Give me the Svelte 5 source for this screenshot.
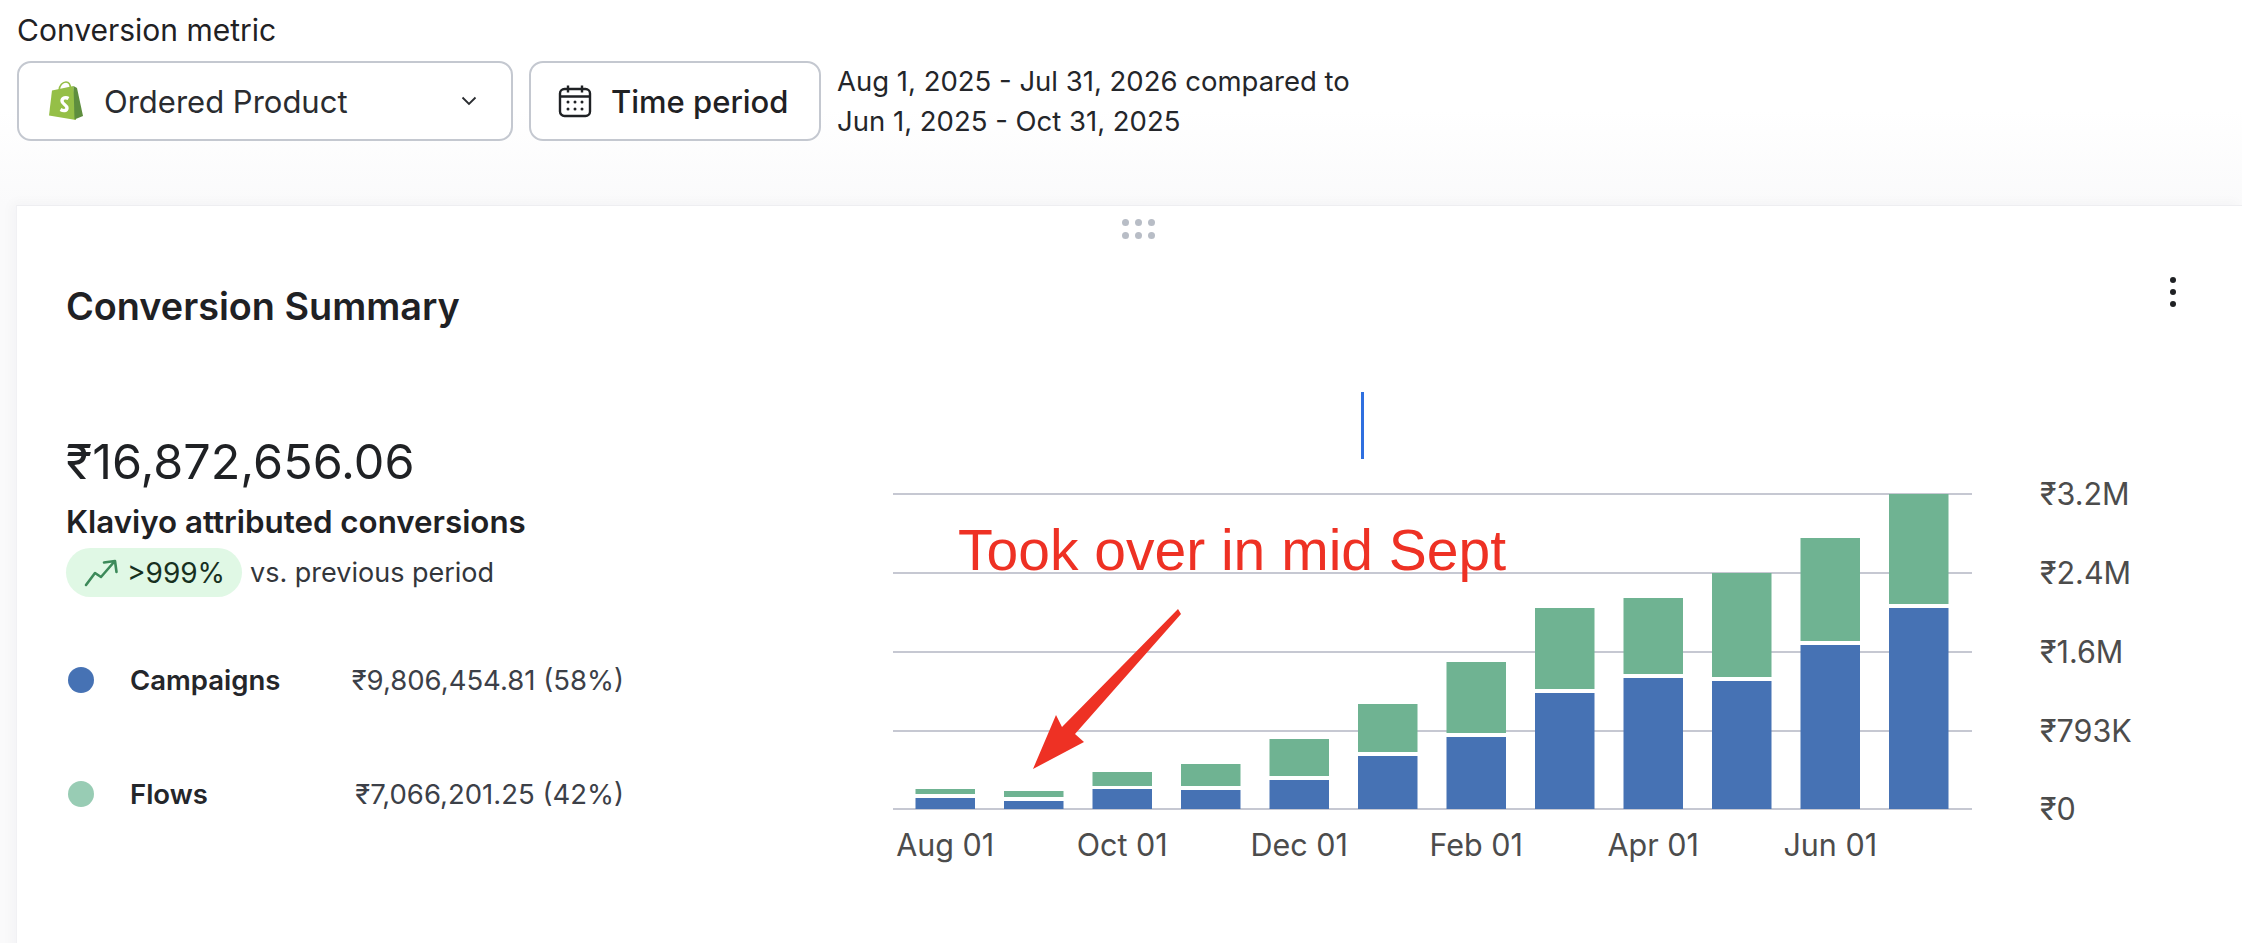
<script lang="ts">
  // y values are page px: the chart svg's viewBox starts at the page y it sits on
  const top = 470;
  const base = 809;
  const grid = [494, 573, 652, 731, 809];
  const ticks = ["₹3.2M", "₹2.4M", "₹1.6M", "₹793K", "₹0"];
  const bars = [
    { green: 789, gap: 794, blue: 798 },
    { green: 791, gap: 797, blue: 801 },
    { green: 772, gap: 786, blue: 789 },
    { green: 764, gap: 786, blue: 790 },
    { green: 739, gap: 776, blue: 780 },
    { green: 704, gap: 752, blue: 756 },
    { green: 662, gap: 733, blue: 737 },
    { green: 608, gap: 689, blue: 693 },
    { green: 598, gap: 674, blue: 678 },
    { green: 573, gap: 677, blue: 681 },
    { green: 538, gap: 641, blue: 645 },
    { green: 494, gap: 604, blue: 608 },
  ];
  const months = ["Aug 01", "Oct 01", "Dec 01", "Feb 01", "Apr 01", "Jun 01"];
  const left = 890;
  const barX = (i: number) => 915.5 - left + i * 88.5;
  const legend = [
    { name: "Campaigns", color: "#4672b4", value: "₹9,806,454.81 (58%)" },
    { name: "Flows", color: "#98ccb4", value: "₹7,066,201.25 (42%)" },
  ];
</script>

<div class="page">
  <div class="controls">
    <div class="label">Conversion metric</div>
    <div class="row">
      <button class="select">
        <svg class="shopify" viewBox="0 0 36 40" width="36" height="40" aria-hidden="true">
          <path d="M4 9.5 25.5 5 28 39 1 34.5Z" fill="#95bf47" />
          <path d="M25.5 5 29 7 35 35 26.5 38.5Z" fill="#5e8e3e" />
          <path d="M11 10C11 4 15 1 18 1c3 0 4.5 3 4.5 7" fill="none" stroke="#95bf47" stroke-width="1.6" />
          <path d="M20.5 17.5c-2.5-1.5-6.5-.8-6.5 2.5 0 3.2 5 3.8 5 7 0 3-3.5 3.2-6.5 1.5" fill="none" stroke="#fff" stroke-width="3.4" />
        </svg>
        <span class="select-text">Ordered Product</span>
        <svg class="chevron" viewBox="0 0 16 10" width="16" height="10" aria-hidden="true">
          <path d="M1.5 1.5 8 8l6.5-6.5" fill="none" stroke="#2a2c30" stroke-width="1.8" />
        </svg>
      </button>
      <button class="period">
        <svg viewBox="0 0 34 34" width="34" height="34" aria-hidden="true">
          <rect x="2" y="5" width="30" height="27" rx="4.5" fill="none" stroke="#1f2124" stroke-width="2.4" />
          <path d="M2 12.5h30M10 1.5v7M24 1.5v7" fill="none" stroke="#1f2124" stroke-width="2.4" />
          <g fill="#1f2124">
            <circle cx="10" cy="18" r="1.5" /><circle cx="17" cy="18" r="1.5" /><circle cx="24" cy="18" r="1.5" />
            <circle cx="10" cy="25" r="1.5" /><circle cx="17" cy="25" r="1.5" /><circle cx="24" cy="25" r="1.5" />
          </g>
        </svg>
        <span>Time period</span>
      </button>
      <div class="range">
        <div>Aug 1, 2025 - Jul 31, 2026 compared to</div>
        <div>Jun 1, 2025 - Oct 31, 2025</div>
      </div>
    </div>
  </div>

  <section class="card">
    <div class="grip" aria-hidden="true">
      {#each Array(6) as _}<i></i>{/each}
    </div>
    <header class="card-head">
      <h2>Conversion Summary</h2>
      <div class="kebab" aria-hidden="true"><i></i><i></i><i></i></div>
    </header>

    <div class="card-body">
      <div class="summary">
        <div class="amount">₹16,872,656.06</div>
        <div class="caption">Klaviyo attributed conversions</div>
        <div class="delta">
          <span class="pill">
            <svg viewBox="0 0 34 28" width="34" height="28" aria-hidden="true">
              <path d="M2 26 11 14l6 4L30 3M20 3.5 31 2l1.5 11" fill="none" stroke="#3d8a5a" stroke-width="2.6" stroke-linejoin="round" stroke-linecap="round" />
            </svg>
            &gt;999%
          </span>
          <span>vs. previous period</span>
        </div>
        <ul class="legend">
          {#each legend as item}
            <li>
              <i style={`background: ${item.color}`}></i>
              <strong>{item.name}</strong>
              <span>{item.value}</span>
            </li>
          {/each}
        </ul>
      </div>

      <div class="chart">
        <div class="marker"></div>
        <svg viewBox={`0 ${top} 1300 410`} width="1300" height="410" role="img" aria-label="Conversions by month">
          {#each grid as y, i}
            <line x1={893 - left} x2={1972 - left} y1={y} y2={y} class="gridline" />
            <text x={2040 - left} y={y + 11} class="tick">{ticks[i]}</text>
          {/each}
          {#each bars as bar, i}
            <rect x={barX(i)} y={bar.green} width="59.5" height={bar.gap - bar.green} fill="#6fb392" />
            <rect x={barX(i)} y={bar.blue} width="59.5" height={base - bar.blue} fill="#4672b4" />
          {/each}
          {#each months as month, i}
            <text x={barX(i * 2) + 29.75} y="856" class="month">{month}</text>
          {/each}
        </svg>
        <div class="note">Took over in mid Sept</div>
        <svg class="arrow" viewBox="0 0 160 170" width="160" height="170" aria-hidden="true">
          <path d="M148 0 151 5 45 125 54 133 3 160 26 106 32 118Z" fill="#ee3124" />
        </svg>
      </div>
    </div>
  </section>
</div>

<style>
  :global(body) {
    margin: 0;
    background: #fff;
  }

  .page {
    height: 943px;
    overflow: hidden;
    font-family: Inter, "Noto Sans", sans-serif;
    color: #1f2124;
    background: linear-gradient(#fff 0, #fff 110px, #fafafb 205px);
  }

  .controls {
    padding: 12px 0 0 17px;
  }

  .label {
    font-size: 30px;
    line-height: 36px;
    margin-bottom: 13px;
  }

  .row {
    display: flex;
    align-items: center;
    gap: 16px;
  }

  button {
    display: flex;
    align-items: center;
    height: 80px;
    box-sizing: border-box;
    background: #fff;
    border: 2px solid #c4c8d0;
    border-radius: 14px;
    font: inherit;
    color: inherit;
  }

  .select {
    width: 496px;
    padding: 0 34px 0 29px;
    font-size: 31px;
    color: #2a2c30;
  }

  .select-text {
    flex: 1;
    text-align: left;
    margin-left: 20px;
  }

  .period {
    width: 292px;
    padding: 0 0 0 27px;
    gap: 19px;
    font-size: 31px;
    font-weight: 500;
  }

  .range {
    font-size: 27.5px;
    line-height: 40px;
    color: #24262a;
  }

  .card {
    position: relative;
    margin: 64px 0 0 16px;
    height: 760px;
    background: #fff;
    border-top: 1px solid #eeeef1;
    border-left: 1px solid #f1f1f4;
    box-shadow: -4px -2px 12px rgba(30, 30, 60, 0.03);
  }

  .grip {
    position: absolute;
    left: 1105px;
    top: 13px;
    display: grid;
    grid-template-columns: repeat(3, 7px);
    gap: 6px 6px;
  }

  .grip i {
    width: 7px;
    height: 7px;
    border-radius: 50%;
    background: #b8bdc6;
  }

  .card-head {
    display: flex;
    align-items: center;
    justify-content: space-between;
    padding: 77px 66px 0 49px;
  }

  h2 {
    margin: 0;
    font-size: 37.8px;
    line-height: 46px;
    font-weight: 600;
    color: #1f2124;
  }

  .kebab {
    display: grid;
    gap: 6px;
    margin-top: -28px;
  }

  .kebab i {
    width: 6px;
    height: 6px;
    border-radius: 50%;
    background: #1f2124;
  }

  .card-body {
    display: flex;
    align-items: flex-start;
  }

  .summary {
    width: 873px;
    box-sizing: border-box;
    padding: 105px 0 0 49px;
    flex: none;
  }

  .amount {
    font-size: 48.5px;
    line-height: 56px;
  }

  .caption {
    font-size: 31.3px;
    line-height: 40px;
    font-weight: 600;
    margin-top: 12px;
  }

  .delta {
    display: flex;
    align-items: center;
    gap: 8px;
    margin-top: 6px;
    font-size: 27px;
    color: #33363b;
  }

  .pill {
    display: inline-flex;
    align-items: center;
    gap: 9px;
    height: 49px;
    width: 176px;
    box-sizing: border-box;
    padding-left: 18px;
    border-radius: 25px;
    background: #e0f8e5;
    color: #17301f;
    font-size: 28px;
  }

  .legend {
    list-style: none;
    margin: 65px 0 0;
    padding: 0;
    width: 558px;
    display: grid;
    gap: 78px;
  }

  .legend li {
    display: flex;
    align-items: center;
    height: 36px;
  }

  .legend i {
    width: 26px;
    height: 26px;
    border-radius: 50%;
    margin: 0 36px 0 2px;
    flex: none;
  }

  .legend strong {
    font-size: 27.5px;
    font-weight: 600;
    color: #24262a;
  }

  .legend span {
    margin-left: auto;
    font-size: 27.5px;
    color: #3c4048;
  }

  .chart {
    position: relative;
    flex: none;
    width: 1300px;
    height: 410px;
    margin-top: 141px;
  }

  .chart > svg:first-of-type {
    display: block;
  }

  .marker {
    position: absolute;
    left: 471px;
    top: -78px;
    width: 3px;
    height: 67px;
    background: #2e6fe0;
  }

  .gridline {
    stroke: #c6c8d2;
    stroke-width: 2;
  }

  .tick,
  .month {
    font-size: 30.5px;
    fill: #4c4c4c;
  }

  .month {
    text-anchor: middle;
  }

  .note {
    position: absolute;
    left: 68px;
    top: 45px;
    font-family: "Liberation Sans", Arial, sans-serif;
    font-size: 57px;
    line-height: 70px;
    color: #ee3124;
    white-space: nowrap;
  }

  .arrow {
    position: absolute;
    left: 140px;
    top: 139px;
  }
</style>
